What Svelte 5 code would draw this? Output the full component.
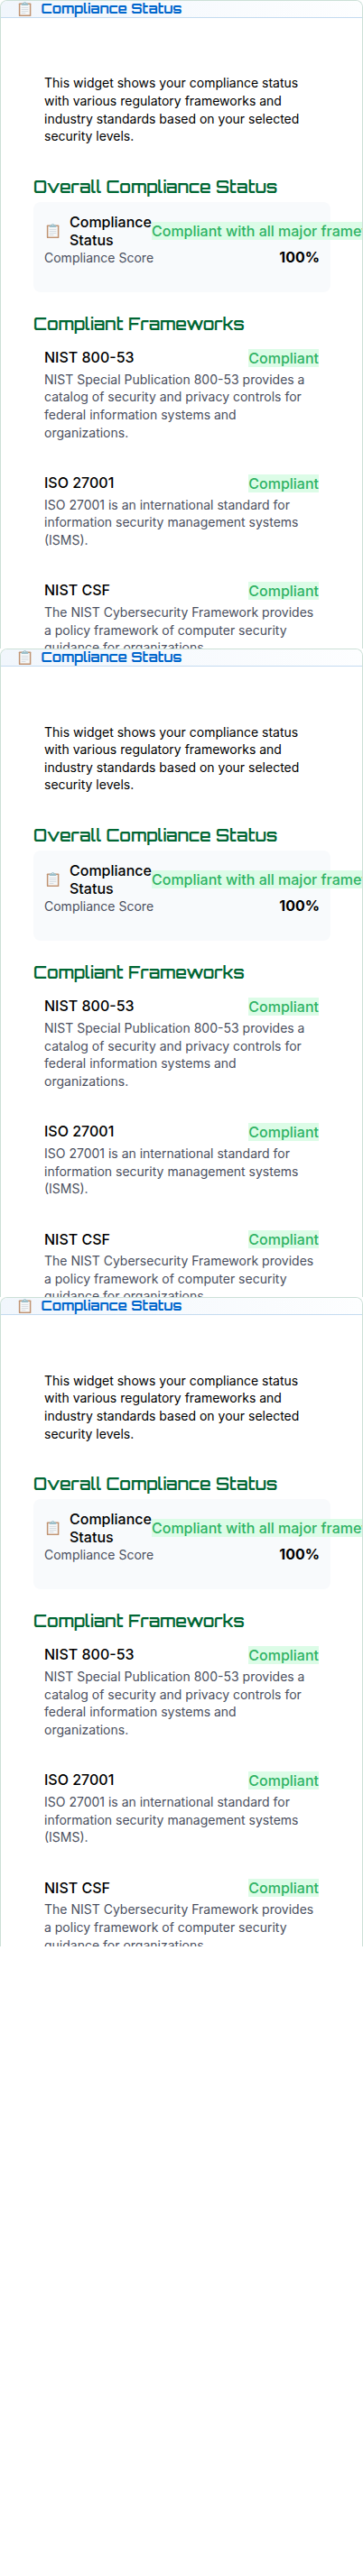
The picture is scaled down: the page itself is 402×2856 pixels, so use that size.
<script>
  const panels = [0, 1, 2];
  const frameworks = [
    { name: 'NIST 800-53', text: 'NIST Special Publication 800-53 provides a catalog of security and privacy controls for federal information systems and organizations.' },
    { name: 'ISO 27001', text: 'ISO 27001 is an international standard for information security management systems (ISMS).' },
    { name: 'NIST CSF', text: 'The NIST Cybersecurity Framework provides a policy framework of computer security guidance for organizations.' }
  ];
</script>

{#snippet clipboard()}
  <svg class="clip" viewBox="0 0 16 18" aria-hidden="true">
    <rect x="0.9" y="2" width="14.4" height="15.6" rx="0.9" fill="#c19473" />
    <path d="M2.5 3.7h11.2v12.3h-11.2z" fill="#f6f8f9" />
    <path d="M4 7.3h8M4 9.5h8M4 11.7h8M4 13.8h5" stroke="#cbd3d9" stroke-width="0.8" />
    <path d="M4 4.8V2.9q0-.8 1-.8h1.2Q6.4.5 8 .5t1.8 1.6H11q1 0 1 .8v1.9z" fill="#9cbfca" />
    <circle cx="8" cy="1.9" r=".6" fill="#e4eef1" />
  </svg>
{/snippet}

<main>
  {#each panels as p (p)}
    <section class="widget">
      <header>{@render clipboard()}<h2><span>Compliance Status</span></h2></header>
      <div class="body">
        <p class="intro">This widget shows your compliance status with various regulatory frameworks and industry standards based on your selected security levels.</p>
        <h3 class="overall"><span>Overall Compliance Status</span></h3>
        <div class="summary">
          <div class="status">
            <div class="label">{@render clipboard()}<span>Compliance Status</span></div>
            <span class="badge">Compliant with all major frameworks</span>
          </div>
          <div class="score"><span>Compliance Score</span><strong>100%</strong></div>
        </div>
        <h3 class="listed"><span>Compliant Frameworks</span></h3>
        {#each frameworks as f (f.name)}
          <article>
            <div class="row"><span class="name">{f.name}</span><span class="badge">Compliant</span></div>
            <p>{f.text}</p>
          </article>
        {/each}
      </div>
    </section>
  {/each}
</main>

<style>
  :global(body) { background: #fff; }
  main {
    height: 2856px;
    width: 402px;
    overflow: hidden;
    font-family: Inter, sans-serif;
    font-size: 14px;
    line-height: 19.6px;
    color: #000;
  }
  .widget {
    box-sizing: border-box;
    height: 719.2px;
    width: 402px;
    border: 1px solid #cce0d7;
    border-bottom: 0;
    border-radius: 8px 8px 0 0;
    overflow: hidden;
    background: #fff;
  }
  header {
    box-sizing: border-box;
    height: 19px;
    display: flex;
    align-items: center;
    border-bottom: 1px solid #c4dbf0;
    background: linear-gradient(90deg, #f1f6fc, #fdfeff);
    padding-left: 19px;
  }
  .clip { width: 15px; height: 18px; flex: none; display: block; }
  h2, h3 { font-family: Orbitron, Inter, sans-serif; white-space: nowrap; margin: 0; }
  h2 {
    font-size: 14.9px;
    line-height: 18px;
    font-weight: 700;
    color: #0066cc;
    margin-left: 10.5px;
  }
  .body { padding: 62.4px 36px 0; }
  p { margin: 0; }
  .intro { padding: 0 12px; }
  h3 { font-size: 18.2px; line-height: 24px; font-weight: 600; color: #006633; }
  .overall { margin-top: 34px; }
  .summary {
    box-sizing: border-box;
    width: 329px;
    height: 100px;
    background: #f8fafc;
    border-radius: 8px;
    padding: 12px;
    margin-top: 5px;
  }
  .status { display: flex; align-items: center; height: 40px; font-size: 16px; line-height: 20px; font-weight: 500; }
  .label { display: flex; align-items: center; gap: 10.7px; width: 119px; flex: none; padding-left: 2.3px; box-sizing: border-box; }
  .badge { color: #2fb364; background: #dcfce7; white-space: nowrap; font-weight: 500; font-size: 16px; line-height: 20px; }
  .score { display: flex; justify-content: space-between; align-items: center; height: 20px; color: #4b5060; }
  .score strong { font-size: 16px; color: #000; font-weight: 700; }
  .listed { margin-top: 23px; margin-bottom: 16px; }
  article { padding: 0 12px; margin-bottom: 36.6px; }
  .row { display: flex; justify-content: space-between; align-items: center; height: 20px; margin-bottom: 4px; }
  .name { font-size: 16px; font-weight: 500; }
  article p { color: #4b5060; }
</style>
